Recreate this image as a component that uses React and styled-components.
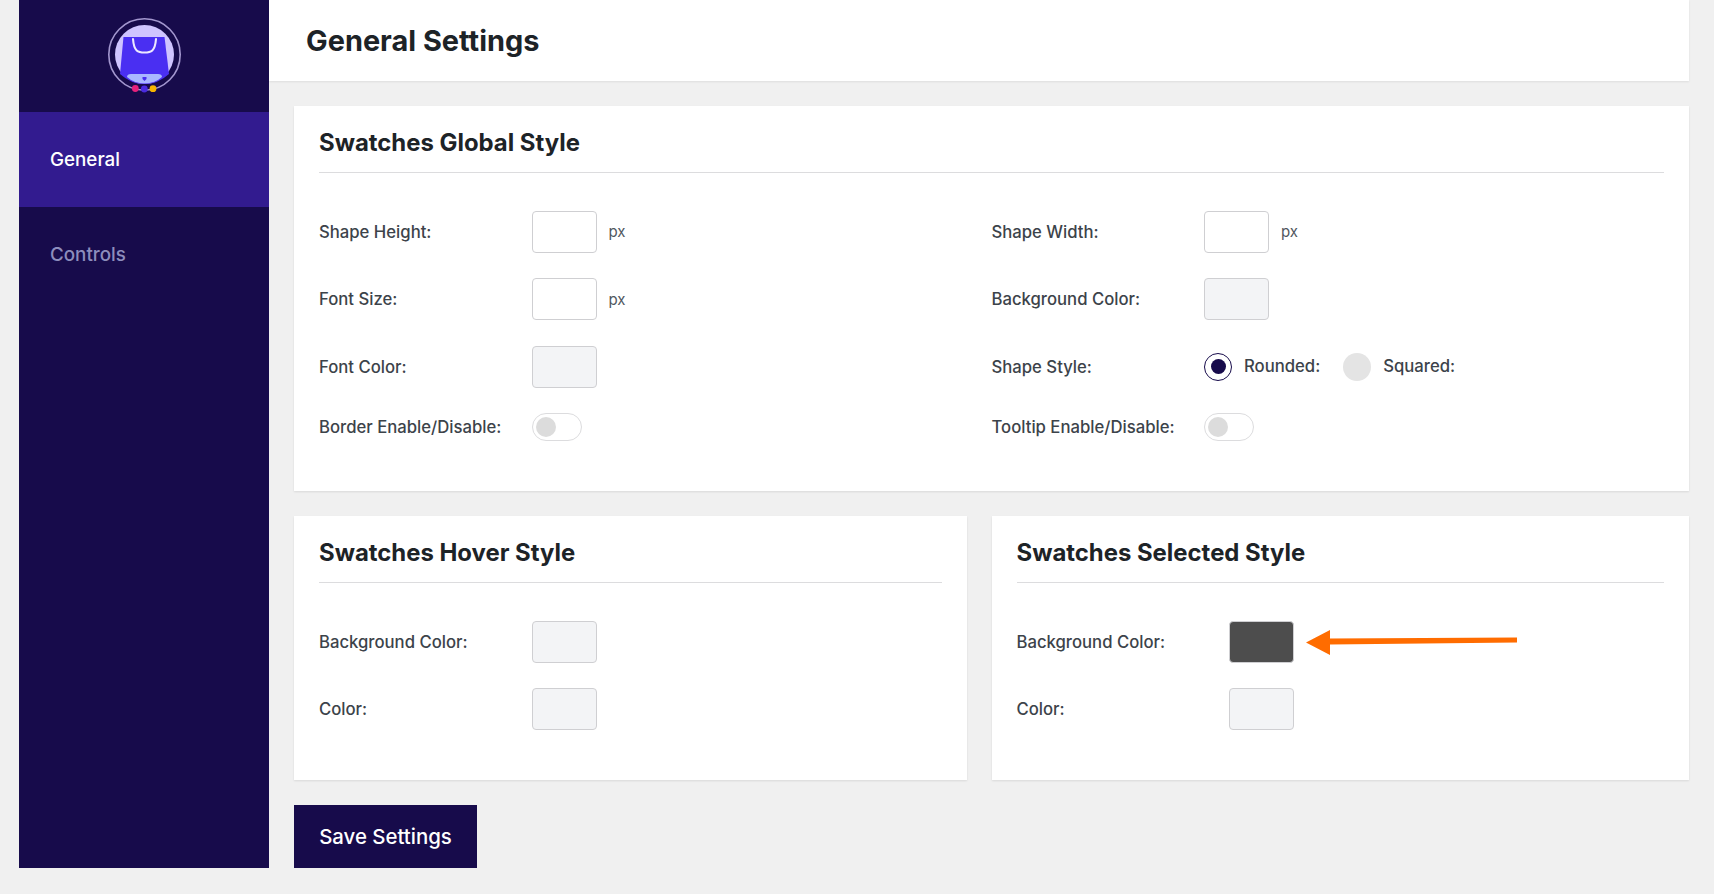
import React from 'react';
import styled, { createGlobalStyle } from 'styled-components';

const GlobalStyle = createGlobalStyle`
  html, body {
    margin: 0;
    padding: 0;
    background: #f0f0f0;
    font-family: "Inter", "Liberation Sans", sans-serif;
    color: #3c434a;
  }
  * { box-sizing: border-box; }
`;

function Logo() {
  return (
    <svg width="74" height="78" viewBox="0 0 74 78">
      <circle cx="36.5" cy="36.5" r="35.7" fill="none" stroke="#a397cf" strokeWidth="1.6" />
      <circle cx="36.5" cy="36.5" r="29.5" fill="#cfc4ff" />
      <path d="M15.5 19 H56.5 L61 56 Q50 66 36.5 66 Q23 66 12 56 Z" fill="#4a2ff2" />
      <path d="M25 21 C26 33.5 30 34.5 36.5 34.5 C43 34.5 47 33.5 48 21" fill="none" stroke="#ece8ff" strokeWidth="2.1" strokeLinecap="round" />
      <path d="M23 56 H50 Q54 56 54 59 Q47 65.5 36.5 65.5 Q26 65.5 19 59 Q19 56 23 56 Z" fill="#a9b8ff" />
      <path d="M34.5 59 h4 v2 l-2 2 l-2 -2 Z" fill="#4a2ff2" />
      <circle cx="27.3" cy="70.5" r="3.4" fill="#e6217c" />
      <circle cx="36.3" cy="71" r="3.4" fill="#4a2be0" />
      <circle cx="45" cy="70.7" r="3.4" fill="#f7b500" />
    </svg>
  );
}

function Arrow() {
  return (
    <ArrowMark width="212" height="28" viewBox="0 0 212 28">
      <path d="M0 14.5 L24 2 V10.5 L211 9.5 V14.5 L24 16.5 V27 Z" fill="#ff6c00" />
    </ArrowMark>
  );
}

function App() {
  return (
    <>
      <GlobalStyle />
      <Page>
        <Sidebar>
          <LogoBox><Logo /></LogoBox>
          <NavItem $active>General</NavItem>
          <NavItem>Controls</NavItem>
        </Sidebar>
        <Main>
          <Header>
            <PageTitle>General Settings</PageTitle>
          </Header>
          <Content>
            <Card>
              <CardTitle>Swatches Global Style</CardTitle>
              <Columns>
                <Rows>
                  <Row>
                    <Label>Shape Height:</Label>
                    <Control><Field type="text" /><Unit>px</Unit></Control>
                  </Row>
                  <Row>
                    <Label>Font Size:</Label>
                    <Control><Field type="text" /><Unit>px</Unit></Control>
                  </Row>
                  <Row>
                    <Label>Font Color:</Label>
                    <Control><Swatch /></Control>
                  </Row>
                  <Row $short>
                    <Label>Border Enable/Disable:</Label>
                    <Control><Toggle><Knob /></Toggle></Control>
                  </Row>
                </Rows>
                <Rows>
                  <Row>
                    <Label>Shape Width:</Label>
                    <Control><Field type="text" /><Unit>px</Unit></Control>
                  </Row>
                  <Row>
                    <Label>Background Color:</Label>
                    <Control><Swatch /></Control>
                  </Row>
                  <Row>
                    <Label>Shape Style:</Label>
                    <Control>
                      <Radio $checked />
                      <RadioLabel>Rounded:</RadioLabel>
                      <Radio />
                      <RadioLabel>Squared:</RadioLabel>
                    </Control>
                  </Row>
                  <Row $short>
                    <Label>Tooltip Enable/Disable:</Label>
                    <Control><Toggle><Knob /></Toggle></Control>
                  </Row>
                </Rows>
              </Columns>
            </Card>
            <Pair>
              <Card>
                <CardTitle>Swatches Hover Style</CardTitle>
                <Rows>
                  <Row>
                    <Label>Background Color:</Label>
                    <Control><Swatch /></Control>
                  </Row>
                  <Row>
                    <Label>Color:</Label>
                    <Control><Swatch /></Control>
                  </Row>
                </Rows>
              </Card>
              <Card>
                <CardTitle>Swatches Selected Style</CardTitle>
                <Rows>
                  <Row>
                    <Label>Background Color:</Label>
                    <Control><Swatch $color="#4d4d4d" /><Arrow /></Control>
                  </Row>
                  <Row>
                    <Label>Color:</Label>
                    <Control><Swatch /></Control>
                  </Row>
                </Rows>
              </Card>
            </Pair>
            <SaveButton>Save Settings</SaveButton>
          </Content>
        </Main>
      </Page>
    </>
  );
}

const Page = styled.div`
  display: flex;
  align-items: flex-start;
  padding: 0 25px 26px 19px;
  min-height: 894px;
`;

const Sidebar = styled.aside`
  width: 250px;
  height: 868px;
  flex-shrink: 0;
  background: #170b4b;
`;

const LogoBox = styled.div`
  height: 112px;
  padding: 18px 0 0 2px;
  display: flex;
  justify-content: center;
`;

const NavItem = styled.div`
  height: 95px;
  display: flex;
  align-items: center;
  padding: 0 0 1px 31px;
  font-size: 18.8px;
  font-weight: 500;
  color: ${(p) => (p.$active ? '#ffffff' : '#8d8dbd')};
  background: ${(p) => (p.$active ? '#321b8f' : 'transparent')};
`;

const Main = styled.main`
  flex: 1;
  min-width: 0;
`;

const Header = styled.header`
  height: 81px;
  display: flex;
  align-items: center;
  padding-left: 37px;
  background: #ffffff;
  box-shadow: 0 1px 2px rgba(0, 0, 0, 0.08);
`;

const PageTitle = styled.h1`
  margin: 0;
  font-size: 28.9px;
  font-weight: 700;
  color: #1d2327;
`;

const Content = styled.div`
  display: flex;
  flex-direction: column;
  align-items: flex-start;
  gap: 25px;
  padding: 25px 0 0 25px;
`;

const Pair = styled.div`
  display: grid;
  grid-template-columns: 672.5px 697.5px;
  gap: 25px;
  width: 100%;
`;

const Card = styled.section`
  width: 100%;
  padding: 18px 25px 50px;
  background: #ffffff;
  box-shadow: 0 1px 2px rgba(0, 0, 0, 0.1);
`;

const CardTitle = styled.h2`
  margin: 0 0 37.5px;
  height: 49px;
  font-size: 23.9px;
  line-height: 38px;
  font-weight: 700;
  color: #1d2327;
  border-bottom: 1px solid #dcdcde;
`;

const Columns = styled.div`
  display: grid;
  grid-template-columns: 1fr 1fr;
`;

const Rows = styled.div`
  display: flex;
  flex-direction: column;
  gap: 25.5px;
`;

const Row = styled.div`
  display: grid;
  grid-template-columns: 212.5px 1fr;
  align-items: center;
  height: ${(p) => (p.$short ? '28px' : '42px')};
`;

const Label = styled.label`
  font-size: 16.7px;
  font-weight: 500;
  color: #3c434a;
`;

const Control = styled.div`
  display: flex;
  align-items: center;
`;

const Field = styled.input`
  width: 65px;
  height: 42px;
  padding: 0;
  background: #ffffff;
  border: 1px solid #cfcfd2;
  border-radius: 4px;
`;

const Swatch = styled.div`
  width: 65px;
  height: 42px;
  background: ${(p) => p.$color || '#f3f4f6'};
  border: 1px solid #cfcfd2;
  border-radius: 4px;
`;

const Unit = styled.span`
  margin-left: 12px;
  font-size: 15px;
  color: #50575e;
`;

const ArrowMark = styled.svg`
  margin-left: 12px;
`;

const Toggle = styled.div`
  width: 50px;
  height: 28px;
  padding: 3px;
  background: #ffffff;
  border: 1px solid #dcdcde;
  border-radius: 14px;
`;

const Knob = styled.div`
  width: 20px;
  height: 20px;
  background: #dcdcdc;
  border-radius: 50%;
`;

const Radio = styled.span`
  width: 28px;
  height: 28px;
  flex-shrink: 0;
  border-radius: 50%;
  background: ${(p) => (p.$checked ? '#ffffff' : '#e4e4e4')};
  border: ${(p) => (p.$checked ? '1px solid #170b4b' : 'none')};
  display: flex;
  align-items: center;
  justify-content: center;
  &::after {
    content: '';
    display: ${(p) => (p.$checked ? 'block' : 'none')};
    width: 15px;
    height: 15px;
    border-radius: 50%;
    background: #170b4b;
  }
`;

const RadioLabel = styled.span`
  margin: 0 23px 2px 12px;
  font-size: 16.7px;
  font-weight: 500;
  color: #3c434a;
`;

const SaveButton = styled.button`
  width: 183px;
  height: 63px;
  padding: 0;
  border: none;
  background: #170b4b;
  color: #ffffff;
  font-family: inherit;
  font-size: 20.4px;
  font-weight: 500;
  cursor: pointer;
`;

export default App;
